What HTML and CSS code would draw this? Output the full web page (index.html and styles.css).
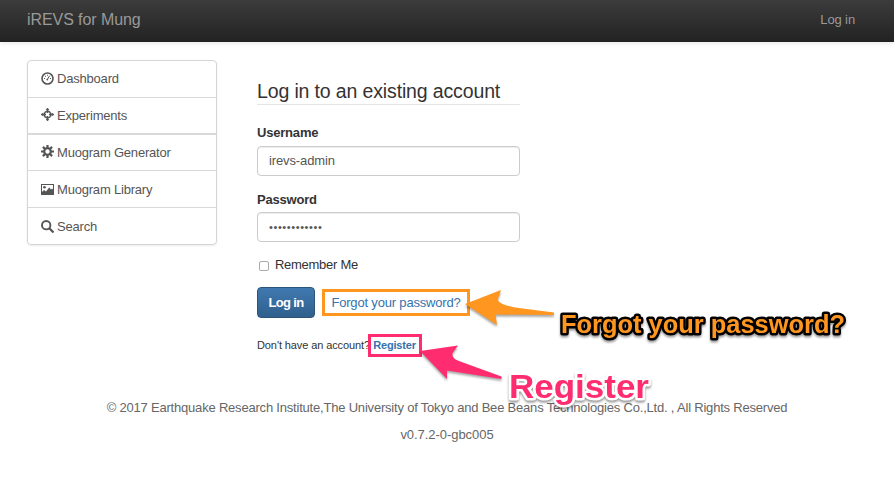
FILE: index.html
```html
<!DOCTYPE html>
<html lang="en">
<head>
<meta charset="utf-8">
<title>iREVS for Mung</title>
<link rel="stylesheet" href="styles.css">
</head>
<body>
<header class="navbar"><a class="brand">iREVS for Mung</a><a class="nav-login">Log in</a></header>
<main class="content">
  <nav class="menu">
    <div class="menu-group group-main">
      <a class="item"><svg class="icon" viewBox="0 0 13 13"><circle cx="6.5" cy="6.5" r="5.5" fill="none" stroke="#555" stroke-width="1.6"/><path d="M6.3 7.5 8.6 3.8" stroke="#555" stroke-width="1"/><circle cx="6.3" cy="7.6" r=".9"/><path d="M3 6h1v1H3zM4 3.700h1v1H4zM6 2.800h1v1H6zM9 6h1v1H9z"/></svg>Dashboard</a>
      <a class="item"><svg class="icon" viewBox="0 0 13 13"><circle cx="6.5" cy="6.5" r="3.2" fill="none" stroke="#555" stroke-width="1.3"/><path d="M6.500 .3v4.700M6.500 8v4.700M.3 6.500H5M8 6.500h4.700" stroke="#555" stroke-width="1.500"/><path d="M4.500 2.300 6.500 0l2 2.300zM4.500 10.700l2 2.300 2-2.300zM2.300 4.500 0 6.500l2.300 2zM10.700 4.500l2.300 2-2.300 2z"/></svg>Experiments</a>
    </div>
    <div class="menu-group group-tools">
      <a class="item"><svg class="icon" viewBox="0 0 13 13"><circle cx="6.5" cy="6.5" r="3.3" fill="none" stroke="#555" stroke-width="2.2"/><path d="M6.500 0v3M6.500 10v3M0 6.500h3M10 6.500h3M1.900 1.900 4 4M9 9l2.100 2.100M11.100 1.900 9 4M4 9l-2.100 2.100" stroke="#555" stroke-width="2.200"/></svg>Muogram Generator</a>
      <a class="item"><svg class="icon" viewBox="0 0 13 13"><path fill-rule="evenodd" d="M0 1h13v11H0zM1 2v7l2-2 2 1.500 3.200-4 1.800 2 1-1 1 1V2z"/><circle cx="3.500" cy="4.200" r="1.300"/></svg>Muogram Library</a>
      <a class="item"><svg class="icon" viewBox="0 0 13 13"><circle cx="5.200" cy="5.200" r="4.200" fill="none" stroke="#555" stroke-width="1.900"/><path d="m8.500 8.500 3.300 3.300" stroke="#555" stroke-width="2.300" stroke-linecap="round"/></svg>Search</a>
    </div>
  </nav>
  <form class="login">
    <h1>Log in to an existing account</h1>
    <label class="label" for="user">Username</label>
    <input class="field" id="user" type="text" value="irevs-admin">
    <label class="label label-pass" for="pass">Password</label>
    <input class="field secret" id="pass" type="text" value="••••••••••••">
    <label class="remember"><span class="check"></span>Remember Me</label>
    <div class="actions"><button class="submit" type="button">Log in</button><a class="forgot">Forgot your password?</a></div>
    <p class="signup">Don't have an account?<a class="register">Register</a></p>
  </form>
</main>
<footer class="footer"><p class="copyright">© 2017 Earthquake Research Institute,The University of Tokyo and Bee Beans Technologies Co.,Ltd. , All Rights Reserved</p><p class="version">v0.7.2-0-gbc005</p></footer>
<svg class="notes" viewBox="0 0 894 492">
  <path class="orange" d="M465 304 501 290 497.500 300C500 304 507 306 515 307.500L554 312.500V315L495.500 314.500 497 325Z"/>
  <path class="pink" d="M420 351 458 345.500 452.500 353C452 357 454 359 459 361L501.500 376.500V379L447 370.500V379Z"/>
  <text class="note-forgot" x="561" y="332.500" textLength="284" lengthAdjust="spacingAndGlyphs">Forgot your password?</text>
  <text class="note-register" x="509" y="397.500" textLength="140" lengthAdjust="spacingAndGlyphs">Register</text>
</svg>
</body>
</html>
```
FILE: styles.css
```css
* { box-sizing: border-box; }
body { margin: 0; height: 492px; overflow: hidden; background: #fff; color: #333; font: 13px/18px "Liberation Sans", Arial, sans-serif; letter-spacing: -.12px; }
.navbar { height: 42px; padding: 0 39px 3px 27px; display: flex; align-items: center; justify-content: space-between; background: linear-gradient(#3c3c3c, #222); box-shadow: 0 1px 5px rgba(0,0,0,.1); color: #999; }
.brand { font-size: 16px; letter-spacing: -.08px; }
.content { display: flex; align-items: flex-start; gap: 40px; padding: 18px 0 0 27px; }
.menu { width: 190px; border-radius: 4px; box-shadow: 0 1px 2px rgba(0,0,0,.08); border: 1px solid #d5d5d5; }
.group-tools { border-top: 2px solid #d9d9d9; }
.item { display: flex; align-items: center; gap: 3px; height: 36px; padding: 0 13px; color: #555; letter-spacing: -.2px; }
.item + .item { border-top: 1px solid #d9d9d9; height: 37px; }
.group-main .item + .item { height: 36px; }
.group-tools .item:first-child { height: 35px; }
.group-tools .item + .item { padding-top: 2px; }
.icon { width: 13px; height: 13px; margin-top: -2px; fill: #555; }
.login { width: 263px; padding-top: 18px; color: #333; }
h1 { margin: 0 0 18px; height: 27px; border-bottom: 1px solid #e5e5e5; font-size: 19.5px; font-weight: 400; line-height: 27px; letter-spacing: -.14px; white-space: nowrap; }
.label { display: block; height: 23px; line-height: 19px; font-weight: 700; letter-spacing: -.2px; }
.label-pass { line-height: 21px; }
.field { display: block; width: 263px; height: 30px; margin: 0 0 13px; padding: 0 11px 1px; border: 1px solid #ccc; border-radius: 4px; box-shadow: inset 0 1px 1px rgba(0,0,0,.075); font: inherit; letter-spacing: -.12px; color: #555; }
.secret { font-size: 11px; letter-spacing: .6px; }
.remember { display: flex; align-items: center; gap: 6px; height: 20px; padding-left: 2px; letter-spacing: -.28px; }
.check { width: 10px; height: 10px; margin-top: 2px; border: 1px solid #aaa; border-radius: 2px; }
.actions { display: flex; align-items: center; gap: 7px; margin-top: 12px; }
.submit { width: 58px; height: 31px; padding: 0; border: 1px solid #2b5579; border-radius: 4px; background: linear-gradient(#4079b0, #2f608d); color: #fff; font: bold 13px "Liberation Sans", Arial, sans-serif; letter-spacing: -.7px; }
.forgot { width: 148px; height: 27px; border: 3px solid #ff9620; text-align: center; line-height: 21px; color: #3572ac; letter-spacing: -.18px; }
.signup { display: flex; align-items: center; margin: 14px 0 0; height: 25px; font-size: 11px; white-space: nowrap; letter-spacing: -.1px; }
.register { width: 54px; height: 23px; margin: 1px 0 0 -2.5px; border: 3px solid #ff2d70; color: #3572ac; font-weight: 700; line-height: 17px; text-align: center; letter-spacing: -.2px; }
.footer { color: #666; text-align: center; margin-top: 42px; letter-spacing: -.2px; }
.footer p { margin: 0 0 9px; white-space: nowrap; }
.footer .version { letter-spacing: -.05px; }
.notes { position: absolute; left: 0; top: 0; width: 894px; height: 492px; pointer-events: none; font-family: "Liberation Sans", Arial, sans-serif; font-weight: 700; letter-spacing: 0; }
.orange { fill: #ff9620; filter: drop-shadow(0 2px 1px rgba(0,0,0,.35)); }
.pink { fill: #ff2d70; filter: drop-shadow(0 2px 1px rgba(0,0,0,.35)); }
.note-forgot { font-size: 25.5px; fill: #ff9620; stroke: #000; stroke-width: 5px; stroke-linejoin: round; paint-order: stroke; filter: drop-shadow(0 2px 1px rgba(0,0,0,.4)); }
.note-register { font-size: 34px; fill: #ff2d70; stroke: #fff; stroke-width: 5px; stroke-linejoin: round; paint-order: stroke; filter: drop-shadow(0 2px 1px rgba(0,0,0,.4)); }
```
